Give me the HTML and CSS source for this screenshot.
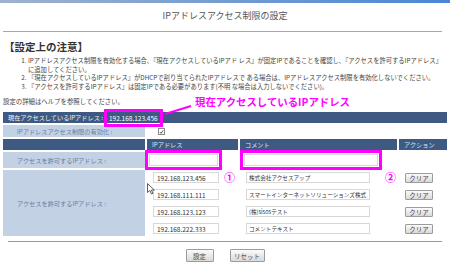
FILE: index.html
```html
<!DOCTYPE html>
<html lang="ja">
<head>
<meta charset="UTF-8">
<link rel="stylesheet" href="styles.css">
<title>IPアドレスアクセス制限の設定</title>
</head>
<body>
<div class="topline"></div>
<h1 class="title">IPアドレスアクセス制限の設定</h1>
<hr class="rule">
<h2 class="notice">【設定上の注意】</h2>
<ol class="notes">
  <li>IPアドレスアクセス制限を有効化する場合、『現在アクセスしているIPアド レス』が固定IPであることを確認し、『アクセスを許可するIPアドレス』<br>に追加してください。</li>
  <li>『現在アクセスしているIPアドレス』がDHCPで割り当てられたIPアドレスで ある場合は、IPアドレスアクセス制限を有効化しないでください。</li>
  <li>『アクセスを許可するIPアドレス』は固定IPである必要があります(不明 な場合は入力しないでください)。</li>
</ol>
<p class="help">設定の詳細はヘルプを参照してください。<span class="callout">現在アクセスしているIPアドレス</span></p>

<div class="form">
  <div class="bar">現在アクセスしているIPアドレス : <span class="ip-now">192.168.123.456</span></div>

  <div class="cell label">IPアドレスアクセス制限の有効化 :</div>
  <div class="cell enable"><span class="check"><svg width="6" height="6" viewBox="0 0 6 6"><path d="M1 3 L2.5 4.6 L5 1" fill="none" stroke="#333" stroke-width="1"/></svg></span></div>

  <div class="cell head"></div>
  <div class="cell head">IPアドレス</div>
  <div class="cell head">コメント</div>
  <div class="cell head">アクション</div>

  <div class="cell label allow">アクセスを許可するIPアドレス :</div>
  <div class="cell field"><input class="ip-input marked" type="text" value=""></div>
  <div class="cell field"><input class="comment-input marked" type="text" value=""></div>
  <div class="cell"></div>

  <div class="cell label group">アクセスを許可するIPアドレス :</div>

  <div class="cell field"><input class="ip-input" type="text" value="192.168.123.456"><span class="num">①</span></div>
  <div class="cell field"><input class="comment-input" type="text" value="株式会社アクセスアップ"><span class="num num-2">②</span></div>
  <div class="cell field"><button class="btn clear">クリア</button></div>

  <div class="cell field"><input class="ip-input" type="text" value="192.168.111.111"></div>
  <div class="cell field"><input class="comment-input" type="text" value="スマートインターネットソリューションズ株式"></div>
  <div class="cell field"><button class="btn clear">クリア</button></div>

  <div class="cell field"><input class="ip-input" type="text" value="192.168.123.123"></div>
  <div class="cell field"><input class="comment-input" type="text" value="(株)sisosテスト"></div>
  <div class="cell field"><button class="btn clear">クリア</button></div>

  <div class="cell field"><input class="ip-input" type="text" value="192.168.222.333"></div>
  <div class="cell field"><input class="comment-input" type="text" value="コメントテキスト"></div>
  <div class="cell field"><button class="btn clear">クリア</button></div>
</div>

<hr class="rule bottom">
<div class="actions">
  <button class="btn submit">設定</button>
  <button class="btn reset">リセット</button>
</div>

<!-- annotations over the screenshot -->
<svg class="pointer-line" width="30" height="12" viewBox="0 0 30 12"><line x1="1" y1="10" x2="27" y2="2" stroke="#ff00ff" stroke-width="2"/></svg>
<svg class="cursor" width="8" height="12" viewBox="0 0 8 12"><path d="M0.5 0.5 L0.5 9.5 L2.8 7.5 L4.5 11 L6 10.3 L4.4 7 L7.3 7 Z" fill="#fff" stroke="#333" stroke-width="0.8"/></svg>
</body>
</html>
```

FILE: styles.css
```css
body {
  margin: 0;
  position: relative;
  width: 450px;
  height: 274px;
  overflow: hidden;
  font-family: "Noto Sans CJK JP", "Liberation Sans", sans-serif;
  color: #3a3a3a;
  background-color: #ffffff;
}

.topline {
  height: 3px;
  background: linear-gradient(to right, #9fb2cc, #4a86d6);
}

.title {
  margin: 0;
  height: 28px;
  line-height: 25px;
  font-size: 9px;
  font-weight: normal;
  text-align: center;
  color: #555;
}

.rule {
  margin: 0 8px 0 3px;
  border: 0;
  border-top: 1px solid #a8a8a8;
}

.rule.bottom {
  margin: 5px 8px 0 8px;
  border-top-color: #999;
}

.notice {
  margin: 8px 0 0;
  padding-left: 4px;
  font-size: 10.5px;
  line-height: 14px;
  font-weight: bold;
  color: #333;
}

.notes {
  margin: 3px 0 0;
  padding-left: 28px;
  font-size: 6.3px;
  line-height: 8.5px;
  white-space: nowrap;
  color: #444;
}

.help {
  position: relative;
  margin: 7px 0 0;
  padding-left: 3px;
  font-size: 6.4px;
  line-height: 8px;
  color: #444;
}

.callout {
  position: absolute;
  left: 195px;
  top: -2px;
  font-size: 10.4px;
  line-height: 12px;
  font-weight: bold;
  color: #ff00ff;
  white-space: nowrap;
}

.form {
  display: grid;
  grid-template-columns: 142px 91px 157px 1fr;
  grid-template-rows: 11px 12px 11px 16px 15px 15px 15px 15px;
  gap: 2px;
  margin: 6px 3px 0;
  font-size: 6.2px;
}

.bar {
  grid-column: 1 / -1;
  display: flex;
  align-items: center;
  padding-left: 5px;
  background-color: #3e5a82;
  color: #f0f3f8;
}

.ip-now {
  position: relative;
  margin-left: 6px;
  font-size: 6.5px;
  color: #ffffff;
}

.ip-now::after {
  content: "";
  position: absolute;
  left: -5px;
  right: -5px;
  top: -4px;
  bottom: -4px;
  border: 3px solid #ff00ff;
}

.cell {
  display: flex;
  align-items: center;
}

.label {
  padding-left: 14px;
  background-color: #c3d1e5;
  color: #6b7d9b;
}

.group {
  grid-row: span 4;
}

.enable {
  grid-column: span 3;
  padding-left: 11px;
}

.check {
  display: inline-flex;
  width: 5px;
  height: 5px;
  border: 1px solid #8a8a8a;
  background-color: #fff;
}

.head {
  padding-left: 5px;
  background-color: #3e5a82;
  color: #dde4ef;
}

.field {
  padding-left: 6px;
}

input {
  box-sizing: border-box;
  height: 11px;
  margin: 0;
  padding: 0 3px;
  border: 1px solid #d8d8d8;
  font-family: inherit;
  font-size: 6.5px;
  color: #333;
  background-color: #fff;
}

.ip-input {
  width: 66px;
}

.comment-input {
  width: 124px;
  padding: 0 1px 0 2px;
  font-size: 5.6px;
}

.marked {
  height: 12px;
  outline: 3px solid #ff00ff;
  outline-offset: 1px;
}

.ip-input.marked {
  width: 69px;
  margin-left: -4px;
}

.comment-input.marked {
  width: 134px;
  margin-left: -2px;
}

.num {
  margin-left: 5px;
  font-size: 11px;
  line-height: 1;
  font-weight: bold;
  color: #ff00ff;
}

.num-2 {
  margin-left: 15px;
}

.btn {
  box-sizing: border-box;
  padding: 0;
  border: 1px solid #9c9c9c;
  border-radius: 1px;
  background: linear-gradient(#fbfbfb, #d9d9d9);
  font-family: inherit;
  font-size: 6.5px;
  color: #444;
}

.clear {
  width: 28px;
  height: 10px;
  line-height: 8px;
}

.actions {
  display: flex;
  justify-content: center;
  gap: 16px;
  margin-top: 7px;
}

.submit,
.reset {
  height: 13px;
}

.submit {
  width: 28px;
}

.reset {
  width: 35px;
}

.pointer-line {
  position: absolute;
  left: 164px;
  top: 104px;
}

.cursor {
  position: absolute;
  left: 147px;
  top: 183px;
}
```
